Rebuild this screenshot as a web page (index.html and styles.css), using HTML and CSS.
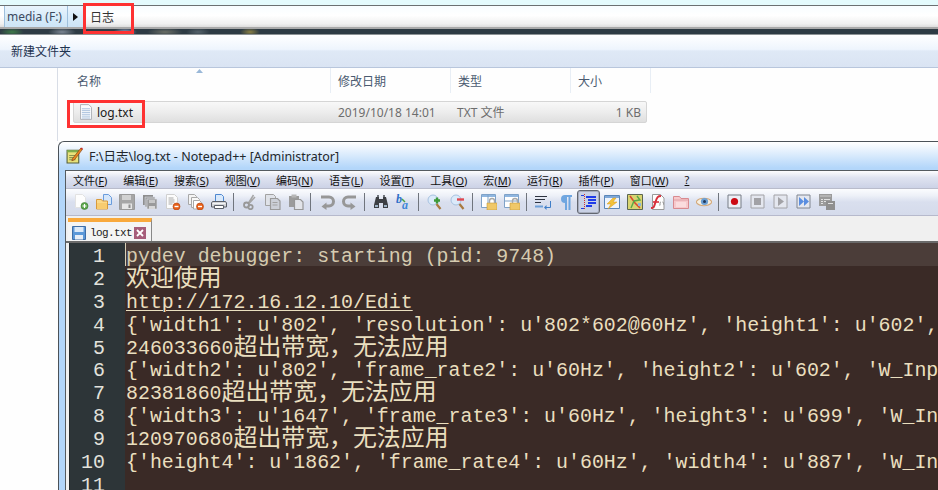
FILE: index.html
```html
<!DOCTYPE html>
<html lang="zh">
<head>
<meta charset="utf-8">
<title>log.txt</title>
<link rel="stylesheet" href="styles.css">
</head>
<body>
<div class="desktop">
  <div class="glass-top"></div>
  <div class="address">
    <span class="crumb">media (F:)</span>
    <span class="crumb-arrow"><svg class="tri" viewBox="0 0 5 8"><path d="M0 0l5 4-5 4z"/></svg></span>
    <span class="crumb-current">日志</span>
  </div>
  <div class="strip"></div>
  <div class="cmdbar"><span>新建文件夹</span></div>
  <div class="split">
    <div class="sidebar"></div>
    <div class="list">
      <div class="headers">
        <span class="col col-name">名称<svg class="sort" viewBox="0 0 9 5"><path d="M4.5 0L9 5H0z"/></svg></span>
        <span class="col col-date">修改日期</span>
        <span class="col col-type">类型</span>
        <span class="col col-size">大小</span>
      </div>
      <div class="row">
        <span class="cell-name">
          <svg class="fileicon" viewBox="0 0 13 17"><path d="M.5.5h9l3 3v13H.5z" fill="#fbfcfe" stroke="#a9adb3"/><path d="M2 5h9M2 7h9M2 9h9M2 11h9M2 13h9M2 15h9" stroke="#a8c0dc"/></svg>
          <span class="filename">log.txt</span>
        </span>
        <span class="cell-date">2019/10/18 14:01</span>
        <span class="cell-type">TXT 文件</span>
        <span class="cell-size">1 KB</span>
      </div>
    </div>
  </div>

  <div class="npp">
    <div class="titlebar">
      <svg class="appicon" viewBox="0 0 16 16"><path d="M1 3h11v12H1z" fill="#e9e27a" stroke="#55603a"/><path d="M1 3h11v2H1z" fill="#7fae4a"/><path d="M3 8h6M3 10h5M3 12h6" stroke="#8b9550"/><path d="M6 11l8-10 1.500 1.200L8 12l-2.500 1z" fill="#e8861f" stroke="#7a3a10" stroke-width=".6"/><path d="M13.500 1.500l1.500-1 .8.8-.8 1.400z" fill="#c9282d"/></svg>
      <span class="title-text">F:\日志\log.txt - Notepad++ [Administrator]</span>
    </div>
    <div class="client">
      <nav class="menu">
        <span>文件(<u>F</u>)</span><span>编辑(<u>E</u>)</span><span>搜索(<u>S</u>)</span><span>视图(<u>V</u>)</span><span>编码(<u>N</u>)</span><span>语言(<u>L</u>)</span><span>设置(<u>T</u>)</span><span>工具(<u>O</u>)</span><span>宏(<u>M</u>)</span><span>运行(<u>R</u>)</span><span>插件(<u>P</u>)</span><span>窗口(<u>W</u>)</span><span><u>?</u></span>
      </nav>
      <div class="toolbar">
        <span class="tb"><svg viewBox="0 0 16 16"><path d="M2.500.5h7l3 3v10h-10z" fill="#fdfdfd" stroke="#e2e2e2"/><circle cx="11.500" cy="12" r="3.500" fill="#5aa64a" stroke="#3c7a34" stroke-width=".6"/><path d="M9.500 12h4M11.500 10v4" stroke="#fff" stroke-width="1.200"/></svg></span>
        <span class="tb"><svg viewBox="0 0 16 16"><path d="M7.500.5h5l3 3v7h-8z" fill="#d5e6fa" stroke="#6a9cdc"/><path d="M.5 5.500h5l1 1.500h5v8H.5z" fill="#fbd98a" stroke="#d89a3c"/><path d="M1 9h10v6H1z" fill="#f8cc70"/></svg></span>
        <span class="tb"><svg viewBox="0 0 16 16"><path d="M.5.500h15v15H.5z" fill="#a6a6a6" stroke="#9a9a9a"/><path d="M3 1h9v5H3z" fill="#d2d2d2"/><path d="M3 9.500h10V15H3z" fill="#e6e6e6"/><path d="M9.500 10.500h2v3.500h-2z" fill="#8f8f8f"/></svg></span>
        <span class="tb"><svg viewBox="0 0 16 16"><path d="M1 1h10v10H1z" fill="#8e8e8e"/><path d="M3 3h10v10H3z" fill="#a2a2a2" stroke="#d8dce6" stroke-width=".6"/><path d="M5 5h10v10H5z" fill="#9a9a9a" stroke="#dde1ea" stroke-width=".6"/><path d="M7 6h6v3H7z" fill="#c8c8c8"/><path d="M7 12h6v3H7z" fill="#d8d8d8"/></svg></span>
        <span class="tb"><svg viewBox="0 0 16 16"><path d="M1.500.5h8l3 3v11h-11z" fill="#fcfcfc" stroke="#d0d0d0"/><path d="M3.500 4h5M3.500 6h6M3.500 8h6M3.500 10h4" stroke="#a8a8a8"/><circle cx="11.500" cy="12.500" r="3.500" fill="#e8601a" stroke="#b23e0a" stroke-width=".6"/><path d="M9.500 12.500h4" stroke="#fff" stroke-width="1.400"/></svg></span>
        <span class="tb"><svg viewBox="0 0 16 16"><path d="M.5.500h6l2 2v8h-8z" fill="#f4f4f4" stroke="#a8a8a8"/><path d="M3.500 3.500h6l2 2v8h-8z" fill="#f8f8f8" stroke="#a8a8a8"/><path d="M5.500 6.500h6l2 2V15h-8z" fill="#fff" stroke="#a8a8a8"/><circle cx="12" cy="12.500" r="3.500" fill="#e8601a" stroke="#b23e0a" stroke-width=".6"/><path d="M10 12.500h4" stroke="#fff" stroke-width="1.400"/></svg></span>
        <span class="tb"><svg viewBox="0 0 16 16"><path d="M4.500.5h6l2 2v5h-8z" fill="#d9e9fb" stroke="#4f88d0"/><path d="M1.500 7.500h13l1 1.500v4h-15V9z" fill="#d4d6da" stroke="#5a5f68"/><path d="M3.500 11.500h9v3h-9z" fill="#fff" stroke="#5a5f68"/><path d="M1.500 9.500h13" stroke="#f4f4f4"/></svg></span>
        <span class="sep"></span>
        <span class="tb"><svg viewBox="0 0 16 16"><path d="M11.500 1L6.500 9M13 3L7 9.500" stroke="#a6a6a6" stroke-width="1.500" fill="none"/><circle cx="4.500" cy="11" r="2.500" fill="none" stroke="#989898" stroke-width="1.800"/><circle cx="8.500" cy="13" r="2.200" fill="none" stroke="#989898" stroke-width="1.800"/></svg></span>
        <span class="tb"><svg viewBox="0 0 16 16"><path d="M.5.500h8l2 2v9H.5z" fill="#dfe2e8" stroke="#a2a2a2"/><path d="M5.500 4.500h7l2.500 2.500v8.500H5.500z" fill="#ccd0d8" stroke="#9a9a9a" stroke-width="1.200"/><path d="M7.500 8.500h5M7.500 11h5" stroke="#a2a2a2"/></svg></span>
        <span class="tb"><svg viewBox="0 0 16 16"><path d="M1 2h10v11H1z" fill="#9b9b9b"/><path d="M3.500 .5h5v3h-5z" fill="#b6b6b6"/><path d="M6.500 5.500h6l2.500 2.500v7.500H6.500z" fill="#e2e4e9" stroke="#979797" stroke-width="1.200"/></svg></span>
        <span class="sep"></span>
        <span class="tb"><svg viewBox="0 0 16 16"><path d="M2 3h8a4 4 0 0 1 0 9H7" fill="none" stroke="#979797" stroke-width="3"/><path d="M7.500 8.500L2.500 12.500l5 3.500z" fill="#979797"/></svg></span>
        <span class="tb"><svg viewBox="0 0 16 16"><path d="M14 3H6a4 4 0 0 0 0 9h3" fill="none" stroke="#979797" stroke-width="3"/><path d="M8.500 8.500l5 4-5 3.500z" fill="#979797"/></svg></span>
        <span class="sep"></span>
        <span class="tb"><svg viewBox="0 0 16 16"><path d="M3 3h3v2h4V3h3l2 8v3h-5V9H6v5H1v-3z" fill="#3c3f44"/><path d="M2 11h3v2H2zM11 11h3v2h-3z" fill="#9fb4c8"/><path d="M4 1h2v2H4zM10 1h2v2h-2z" fill="#70757c"/></svg></span>
        <span class="tb"><svg viewBox="0 0 16 16"><text class="svgletter" x="0" y="9" fill="#2e6fc8">b</text><text class="svgletter" x="6" y="15" fill="#3f86d8">a</text><path d="M6 5l3 3" stroke="#4aa04a" stroke-width="1.500"/></svg></span>
        <span class="sep"></span>
        <span class="tb"><svg viewBox="0 0 16 16"><circle cx="6" cy="6" r="5" fill="#dbeafa" stroke="#a7c2e0"/><path d="M9.500 10l4 5" stroke="#a87a40" stroke-width="2.200"/><path d="M7 6.500h6M10 3.500v6" stroke="#3c9a3a" stroke-width="2.400"/></svg></span>
        <span class="tb"><svg viewBox="0 0 16 16"><circle cx="6" cy="6" r="5" fill="#dbeafa" stroke="#a7c2e0"/><path d="M9.500 10l4 5" stroke="#a87a40" stroke-width="2.200"/><path d="M7 5.500h7" stroke="#e04850" stroke-width="2.400"/></svg></span>
        <span class="sep"></span>
        <span class="tb"><svg viewBox="0 0 16 16"><path d="M.5.500h14v13H.5z" fill="#fff" stroke="#7fa2c8"/><path d="M1 1h13v2H1z" fill="#8fb6e0"/><path d="M7 1v12" stroke="#7fa2c8"/><path d="M6 9h10v7H6z" fill="#f0c868" stroke="#c89a3a" stroke-width=".6"/><path d="M8.500 9V7a2.500 2.500 0 0 1 5 0v2" fill="none" stroke="#a8a8a8" stroke-width="1.400"/></svg></span>
        <span class="tb"><svg viewBox="0 0 16 16"><path d="M.5.500h14v13H.5z" fill="#fff" stroke="#7fa2c8"/><path d="M1 1h13v2H1z" fill="#8fb6e0"/><path d="M1 7h13" stroke="#7fa2c8"/><path d="M6 9h10v7H6z" fill="#f0c868" stroke="#c89a3a" stroke-width=".6"/><path d="M8.500 9V7a2.500 2.500 0 0 1 5 0v2" fill="none" stroke="#a8a8a8" stroke-width="1.400"/></svg></span>
        <span class="sep"></span>
        <span class="tb"><svg viewBox="0 0 16 16"><path d="M0 2.500h12M0 5.500h10M0 8.500h6" stroke="#2d3340"/><path d="M0 12.500h8" stroke="#6fa0d8" stroke-width="2"/><path d="M15.500 7v6.500H10" fill="none" stroke="#3f7ec8"/><path d="M11.500 11L9 13.500l2.500 2.500z" fill="#3f7ec8"/></svg></span>
        <span class="tb"><svg viewBox="0 0 16 16"><path d="M7 1h7v2h-1.500v13h-2V3H9v13H7V9a4 4 0 0 1 0-8z" fill="#6fa6e0"/></svg></span>
        <span class="tb tb-on"><svg viewBox="0 0 16 16"><path d="M3.500 0v16" stroke="#d03030" stroke-dasharray="1 1"/><path d="M0 1.500h3M0 14.500h3" stroke="#2040e0"/><path d="M5 2h10v2H5zM7 5h8v2H7zM7 8h8v2H7zM5 11h6v2H5z" fill="#1f3be8"/></svg></span>
        <span class="tb"><svg viewBox="0 0 16 16"><path d="M.5 1.500h15v13H.5z" fill="#eef4fc" stroke="#5a86b8"/><path d="M1 2h14v2H1z" fill="#7fa8d8"/><path d="M9 4L3 10h4l-3 5 9-7H9l3-4z" fill="#f2c23a" stroke="#d89a20" stroke-width=".5"/></svg></span>
        <span class="tb"><svg viewBox="0 0 16 16"><path d="M.5.500h15v15H.5z" fill="#c9d98a" stroke="#5c6650"/><path d="M1 1h14v14H1z" fill="#e2d060" opacity=".6"/><path d="M3 2l5 7 5 5" stroke="#d84a30" stroke-width="1.600" fill="none"/><path d="M10 2l3 4-6 1-3 7" stroke="#58a848" stroke-width="1.400" fill="none"/><path d="M11 9h3v3h-3z" fill="#8cb8d8"/></svg></span>
        <span class="tb"><svg viewBox="0 0 16 16"><path d="M2.500.5h8l3.500 3.500v11.500h-11.500z" fill="#fdfdfd" stroke="#999"/><path d="M1 14c3 0 3-1 4.500-6S8 2 11 2" fill="none" stroke="#d8303c" stroke-width="2"/><path d="M3 8h6" stroke="#d8303c" stroke-width="1.600"/><path d="M11 8c-1 0-1 1-1 2.500S9.500 11 9.500 11M12.500 8c1 0 1 1 1 2.500" fill="none" stroke="#888"/></svg></span>
        <span class="tb"><svg viewBox="0 0 16 16"><path d="M.5 2.500h6l1.500 2h7.500v10H.5z" fill="#f7c9cc" stroke="#d88a90"/><path d="M1 6h14" stroke="#e0a0a6"/><path d="M3 8h10v5H3z" fill="#fbdcde"/></svg></span>
        <span class="tb"><svg viewBox="0 0 16 16"><path d="M0 8c3-5 13-5 16 0-3 5-13 5-16 0z" fill="#f6efe0" stroke="#d4a878" stroke-width="1.200"/><circle cx="8.500" cy="7.500" r="3.600" fill="#6b9fd4"/><circle cx="8.500" cy="7.500" r="1.500" fill="#203858"/></svg></span>
        <span class="sep"></span>
        <span class="tb"><svg viewBox="0 0 16 16"><path d="M1 1h13v13H1z" fill="#eceff6" stroke="#777c85"/><circle cx="7.500" cy="7.500" r="3.600" fill="#cc0a14"/></svg></span>
        <span class="tb"><svg viewBox="0 0 16 16"><path d="M1 1h13v13H1z" fill="#e4e7ef" stroke="#a2a2a6"/><path d="M4 4h7v7H4z" fill="#a2a2a6"/></svg></span>
        <span class="tb"><svg viewBox="0 0 16 16"><path d="M1 1h13v13H1z" fill="#e4e7ef" stroke="#a2a2a6"/><path d="M5 3l6 4.500L5 12z" fill="#a2a2a6"/></svg></span>
        <span class="tb"><svg viewBox="0 0 16 16"><path d="M1 1h13v13H1z" fill="#e4e7ef" stroke="#808690"/><path d="M3 3l5 4.500L3 12zM8 3l5 4.500L8 12z" fill="#5a8ee0"/></svg></span>
        <span class="tb"><svg viewBox="0 0 16 16"><path d="M0 0h13v12H0z" fill="#9b9b9b"/><path d="M1 1h11v2H1z" fill="#b4b4b4"/><path d="M2 5h2v1H2zM5 5h6v1H5zM2 7h2v1H2zM5 7h3v1H5zM2 9h2v1H2z" fill="#e2e2e2"/><path d="M7 7h9v9H7z" fill="#8f8f8f"/><path d="M9 9h5v1H9z" fill="#e2e2e2"/></svg></span>
      </div>
      <div class="tabbar">
        <div class="tab">
          <svg class="tabicon" viewBox="0 0 14 14"><path d="M.5.500h13v13H.5z" fill="#5c98d8" stroke="#3f6ea8"/><path d="M2.500 1h9v5h-9z" fill="#dce9f8"/><path d="M3 9h8v4.500H3z" fill="#e8eef6"/></svg>
          <span class="tabname">log.txt</span>
          <svg class="tabclose" viewBox="0 0 12 12"><path d="M0 0h12v12H0z" fill="#a65d7a"/><path d="M3 3l6 6M9 3L3 9" stroke="#fff" stroke-width="1.800"/></svg>
        </div>
      </div>
      <div class="editor">
        <div class="line current"><span class="ln">1</span><span class="code caret">pydev debugger: starting (pid: 9748)</span></div>
        <div class="line"><span class="ln">2</span><span class="code"><span class="cjk">欢迎使用</span></span></div>
        <div class="line"><span class="ln">3</span><span class="code"><span class="link">http://172.16.12.10/Edit</span></span></div>
        <div class="line"><span class="ln">4</span><span class="code">{'width1': u'802', 'resolution': u'802*602@60Hz', 'height1': u'602', 'W_Input': u'802'}</span></div>
        <div class="line"><span class="ln">5</span><span class="code">246033660<span class="cjk">超出带宽，无法应用</span></span></div>
        <div class="line"><span class="ln">6</span><span class="code">{'width2': u'802', 'frame_rate2': u'60Hz', 'height2': u'602', 'W_Input2': u'802'}</span></div>
        <div class="line"><span class="ln">7</span><span class="code">82381860<span class="cjk">超出带宽，无法应用</span></span></div>
        <div class="line"><span class="ln">8</span><span class="code">{'width3': u'1647', 'frame_rate3': u'60Hz', 'height3': u'699', 'W_Input3': u'1647'}</span></div>
        <div class="line"><span class="ln">9</span><span class="code">120970680<span class="cjk">超出带宽，无法应用</span></span></div>
        <div class="line"><span class="ln">10</span><span class="code">{'height4': u'1862', 'frame_rate4': u'60Hz', 'width4': u'887', 'W_Input4': u'887'}</span></div>
        <div class="line"><span class="ln">11</span><span class="code"></span></div>
      </div>
    </div>
  </div>

  <div class="mark mark-crumb"></div>
  <div class="mark mark-file"></div>
</div>
</body>
</html>
```
FILE: styles.css
```css
* { box-sizing: border-box; }
html, body { margin: 0; padding: 0; background: #fff; }
body { font-family: "Noto Sans", "Noto Sans CJK SC", sans-serif; font-size: 12px; color: #1e1e1e; }
svg { display: block; }

.desktop { position: relative; width: 938px; height: 490px; overflow: hidden; background: #fefefe; }

.glass-top { height: 5px; background: #e4fbfd; }

.address {
  display: flex; align-items: stretch; height: 24px;
  border-top: 1px solid #6b7072; border-bottom: 2px solid #a9a9a9;
  background: linear-gradient(#f8fdff, #ffffff 45%, #f0f0f0 85%, #dcdcdc);
}
.crumb {
  width: 64px; margin-left: 4px; padding: 0 2px; display: flex; align-items: center;
  color: #3c4a5e; font-size: 12px; white-space: nowrap;
  background: linear-gradient(#eaf5fd, #d8ecfa 50%, #cde4f6);
  border-left: 1px solid #9fc0dc; border-right: 1px solid #9fc0dc;
}
.crumb-arrow {
  width: 16px; display: flex; align-items: center; justify-content: center;
  background: linear-gradient(#eaf5fd, #d8ecfa 50%, #cde4f6);
  border-right: 1px solid #9fc0dc;
}
.tri { width: 5px; height: 8px; fill: #111; }
.crumb-current { margin-left: 6px; display: flex; align-items: center; color: #333; font-size: 12px; }

.strip {
  height: 6px; border-bottom: 1px solid #8d9396;
  background:
    radial-gradient(ellipse 12px 4px at 12px 3px, #3d7a48, transparent),
    radial-gradient(ellipse 14px 4px at 62px 3px, #7d8794, transparent),
    radial-gradient(ellipse 12px 4px at 125px 3px, #8fa0c8, transparent),
    radial-gradient(ellipse 18px 4px at 165px 3px, #6b6f66, transparent),
    radial-gradient(ellipse 12px 4px at 198px 3px, #56636b, transparent),
    radial-gradient(ellipse 10px 4px at 250px 3px, #8a8044, transparent),
    #2e3b44;
}

.cmdbar {
  height: 33px; padding: 0 0 1px 11px; display: flex; align-items: center;
  color: #1f3350; font-size: 12px;
  background: linear-gradient(#ffffff, #eef5fd 45%, #dfe9f6 50%, #dae4f3);
  border-bottom: 1px solid #b8c6dc;
}

.split { display: flex; height: 73px; }
.sidebar { width: 58px; border-right: 1px solid #d8dde6; }
.list { flex: 1; padding-left: 15px; }

.headers { display: flex; height: 25px; color: #4a5a70; font-size: 12px; }
.col { display: flex; align-items: center; padding-left: 7px; border-right: 1px solid #e8eef5; position: relative; }
.col-name { width: 258px; padding-left: 4px; }
.col-date { width: 120px; }
.col-type { width: 120px; }
.col-size { width: 80px; }
.sort { position: absolute; left: 123px; top: 1px; width: 7px; height: 4px; fill: #9ab8d8; }

.row {
  display: flex; align-items: center; width: 574px; height: 22px; margin-top: 8px;
  border: 1px solid #d5d5d5; border-radius: 2px; color: #6d6d6d; font-size: 12px;
  background: linear-gradient(#f8f8f8, #ededed 50%, #dfdfdf);
}
.cell-name { width: 264px; display: flex; align-items: center; padding-left: 6px; gap: 5px; color: #1a1a1a; }
.fileicon { width: 12px; height: 16px; }
.filename { font-size: 12px; }
.cell-date { width: 119px; }
.cell-type { width: 120px; }
.cell-size { width: 64px; text-align: right; }

.npp {
  margin: 0 0 0 58px; height: 349px; padding: 1px 0 0 6px;
  border: 1px solid #4b5258; border-right: 0; border-bottom: 0;
  border-top-left-radius: 6px;
  background: linear-gradient(#ffffff 0, #f4f9fe 4px, #b3d6fa 26px);
}
.titlebar { height: 27px; padding-bottom: 3px; display: flex; align-items: center; }
.appicon { width: 17px; height: 17px; margin-left: 1px; }
.title-text { margin-left: 6px; color: #23272c; font-size: 12.5px; white-space: nowrap; }

.client { height: 320px; border: 1px solid #555b60; border-right: 0; border-bottom: 0; background: #f0f0f0; }

.menu {
  display: flex; height: 18px; padding-left: 7px; gap: 16px; align-items: center;
  font-size: 11px; color: #111; white-space: nowrap;
  background: linear-gradient(#fdfdfe, #dfe3f0 40%, #ccd2e6);
  border-bottom: 1px solid #b9bccb;
}
.toolbar {
  display: flex; align-items: center; height: 27px; padding-left: 3px;
  background: linear-gradient(#fbfcfe, #eef1f8 25%, #d9dfee 50%, #d5dbeb);
  border-bottom: 1px solid #b6b9cc;
}
.tb { width: 23px; height: 24px; flex: none; display: flex; align-items: center; justify-content: center; }
.tb svg { width: 16px; height: 16px; }
.tb-on { border: 1px solid #62666f; border-radius: 3px; background: #c9d1e5; box-shadow: inset 0 0 0 1px #a7adbc; }
.sep { width: 8px; height: 18px; flex: none; position: relative; }
.sep::before { content: ""; position: absolute; left: 3px; top: 0; width: 1px; height: 18px; background: #70757d; }
.svgletter { font-family: "Liberation Serif", serif; font-style: italic; font-weight: 700; font-size: 12px; }

.tabbar { height: 27px; padding: 2px 0 0 2px; background: #f0f0f0; border-bottom: 2px solid #6a6a6a; }
.tab {
  width: 84px; height: 23px; display: flex; align-items: center; padding: 2px 0 0 4px;
  background: #f4f4f4; border-top: 4px solid #f9a93c; border-right: 1px solid #888;
}
.tabicon { width: 14px; height: 14px; }
.tabname { margin-left: 4px; width: 44px; font-family: "Liberation Mono", monospace; font-size: 11px; letter-spacing: -.6px; color: #222; }
.tabclose { width: 12px; height: 12px; }

.editor {
  height: 247px; margin-left: 3px; background: #3a2a26; border-left: 1px solid #23282b;
  font-family: "Liberation Mono", monospace; font-size: 19.92px; color: #eadfbf;
  overflow: hidden;
}
.line { display: flex; height: 22.9px; line-height: 27.5px; white-space: pre; }
.line.current { background: #4b3d39; color: #d6cbb0; }
.ln {
  flex: none; width: 55px; padding-right: 20px; text-align: right;
  background: #2d3538; color: #e2e2dc;
}
.code { flex: none; padding-left: 1px; }
.caret { box-shadow: inset 1px 0 0 #d8cfb6; }
.cjk { font-family: "Noto Sans CJK SC", sans-serif; font-size: 23.9px; line-height: 0; vertical-align: -1px; }
.link { text-decoration: underline; text-underline-offset: 2px; text-decoration-thickness: 1px; }

.mark { position: absolute; border: 3px solid #fe3232; pointer-events: none; }
.mark-crumb { left: 83px; top: 3px; width: 51px; height: 31px; }
.mark-file { left: 67px; top: 100px; width: 78px; height: 28px; }
```
